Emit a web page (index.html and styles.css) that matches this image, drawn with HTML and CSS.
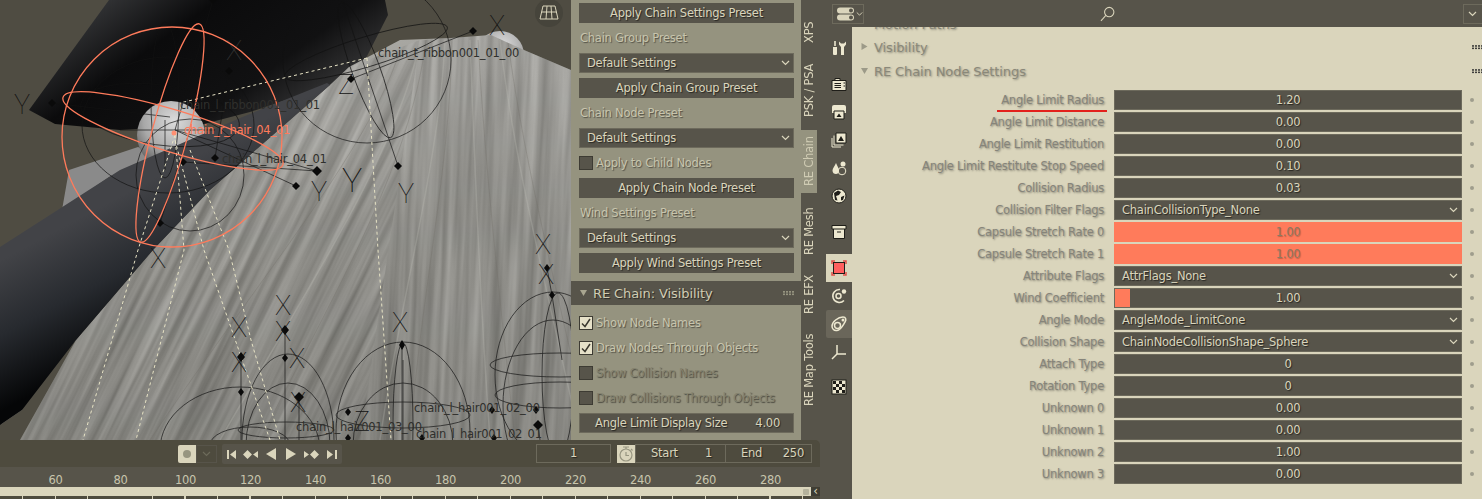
FILE: index.html
```html
<!DOCTYPE html>
<html lang="en">
<head>
<meta charset="utf-8">
<title>RE Chain Node Settings</title>
<link rel="stylesheet" href="styles.css">
</head>
<body>
<div class="app">
  <div class="left">
    <div class="top">
      <svg class="view" width="571" height="440" viewBox="0 0 571 440">
        <defs>
          <linearGradient id="hat" x1="0" y1="0" x2="1" y2="0.5"><stop offset="0" stop-color="#505154"/><stop offset=".18" stop-color="#303133"/><stop offset=".42" stop-color="#0b0b0c"/><stop offset=".75" stop-color="#111112"/><stop offset="1" stop-color="#3a3a3b"/></linearGradient>
          <linearGradient id="band" x1="0.62" y1="0.2" x2="0.8" y2="0.55"><stop offset="0" stop-color="#424347"/><stop offset=".5" stop-color="#272a2f"/><stop offset="1" stop-color="#050607"/></linearGradient>
          <linearGradient id="cloth" x1="0" y1="0" x2="0" y2="1"><stop offset="0" stop-color="#a8a7a2"/><stop offset=".5" stop-color="#92918b"/><stop offset="1" stop-color="#878680"/></linearGradient>
          <radialGradient id="ball" cx=".55" cy=".3" r=".75"><stop offset="0" stop-color="#dcdcdc"/><stop offset=".6" stop-color="#a8a8a8"/><stop offset="1" stop-color="#555"/></radialGradient>
          <clipPath id="clothclip"><path d="M349 67L400 40L451 38L491 35L524 50L571 70V440H20L76 340L153 250L210 190L330 85Z"/></clipPath>
          <clipPath id="clipL"><path d="M349 67L420 40L360 440H20L76 340L153 250L210 190L330 85Z"/></clipPath>
          <clipPath id="clipR"><path d="M420 40L451 38L491 35L524 50L571 70V440H360Z"/></clipPath>
          <filter id="streak" x="0" y="0" width="1" height="1" color-interpolation-filters="sRGB"><feTurbulence type="fractalNoise" baseFrequency="0.11 0.004" numOctaves="3" seed="7"/><feColorMatrix values="1.500 0 0 0 -.25 1.500 0 0 0 -.25 1.500 0 0 0 -.25 0 0 0 0 1"/></filter>
        </defs>
        <rect class="v-bg" width="571" height="440"/>
        <circle cx="500" cy="55" r="24" fill="url(#ball)"/>
        <path d="M29 110L109 0H385L388 15L365 60L330 85L250 112L200 125L120 130L55 124Z" fill="url(#hat)"/>
        <path d="M62 210L69 170L138 147L170 160L109 177Z" class="v-box"/>
        <path d="M0 425L22 410L40 350L76 300V340Z" class="v-box2"/>
        <circle cx="171" cy="135" r="34" fill="url(#ball)"/>
        <path d="M349 67L400 40L451 38L491 35L524 50L571 70V440H20L76 340L153 250L210 190L330 85Z" fill="url(#cloth)"/>
        <g clip-path="url(#clipL)"><rect class="tex" x="-200" y="0" width="800" height="440" filter="url(#streak)" transform="translate(220 0) skewX(-26)"/></g>
        <g clip-path="url(#clipR)"><rect class="tex" x="200" y="0" width="500" height="440" filter="url(#streak)" transform="translate(60 0) skewX(-3)"/></g>
        <g clip-path="url(#clothclip)" class="strands">
          <path d="M420 40C400 150 300 300 220 440M445 40C440 160 400 300 380 440M470 40C475 170 480 300 490 440M500 40C515 170 550 300 580 440"/>
          <path class="s2" d="M400 50C370 150 250 290 150 440M426 40C410 170 330 300 260 440M452 40C450 170 420 300 410 440M478 40C485 170 500 300 515 440M508 42C525 170 560 300 590 440"/>
        </g>
        <path d="M327 83L240 118L120 170L0 247V425L22 410L76 340L153 250L210 190L330 85Z" fill="url(#band)"/>
        <g class="wire">
          <ellipse cx="168" cy="125" rx="86" ry="68"/>
          <ellipse cx="160" cy="115" rx="80" ry="30" transform="rotate(8 160 115)"/>
          <ellipse cx="165" cy="100" rx="14" ry="78"/>
          <ellipse cx="190" cy="175" rx="54" ry="56"/>
          <ellipse cx="367" cy="60" rx="84" ry="83"/>
          <ellipse cx="366" cy="52" rx="85" ry="15" transform="rotate(-17 366 52)"/>
          <ellipse cx="366" cy="70" rx="14" ry="72" transform="rotate(-20 366 70)"/>
          <path d="M52 103L170 117M213 0L175 130M473 31L351 79M342 0L398 166M175 130L296 186M175 130L317 171M183 162L317 171M229 71L215 158M160 223L190 130M120 130H215M165 120V170"/>
          <path d="M241 357V440M285 330V440M402 345V440M547 268L552 295L562 360M299 397V440M538 425L540 440M403 360V440"/>
          <ellipse cx="403" cy="432" rx="67" ry="90"/>
          <ellipse cx="403" cy="445" rx="50" ry="62"/>
          <ellipse cx="403" cy="415" rx="67" ry="13"/>
          <ellipse cx="403" cy="425" rx="10" ry="82"/>
          <ellipse cx="288" cy="440" rx="46" ry="86"/>
          <ellipse cx="288" cy="445" rx="42" ry="62"/>
          <ellipse cx="286" cy="430" rx="48" ry="8"/>
          <ellipse cx="240" cy="450" rx="80" ry="63"/>
          <ellipse cx="250" cy="445" rx="40" ry="18"/>
          <ellipse cx="553" cy="375" rx="58" ry="83"/>
          <ellipse cx="553" cy="405" rx="50" ry="85"/>
          <ellipse cx="560" cy="365" rx="70" ry="12"/>
          <ellipse cx="560" cy="395" rx="65" ry="13"/>
          <ellipse cx="558" cy="375" rx="16" ry="82"/>
        </g>
        <path class="dash" d="M367 58L180 103M367 58L378 250L391 440M175 135L138 250L83 440M175 135L184 250L136 440M175 140L204 250L270 440M190 150L229 250L251 340L280 440"/>
        <g class="nodes">
          <path d="M52 99l4 4-4 4-4-4zM473 27l4 4-4 4-4-4zM351 75l4 4-4 4-4-4zM398 162l4 4-4 4-4-4zM317 166l5 5-5 5-5-5zM296 182l4 4-4 4-4-4zM160 219l4 4-4 4-4-4zM213-4l4 4-4 4-4-4zM229 67l4 4-4 4-4-4zM215 154l4 4-4 4-4-4zM183 158l4 4-4 4-4-4zM241 352l4 5-4 5-4-5zM285 325l4 5-4 5-4-5zM285 354l3 4-3 4-3-4zM299 392l5 5-5 5-5-5zM402 340l3 5-3 5-3-5zM348 408l3 4-3 4-3-4zM538 420l5 5-5 5-5-5zM547 264l3 4-3 4-3-4zM552 291l3 4-3 4-3-4zM536 406l3 4-3 4-3-4zM492 406l3 4-3 4-3-4zM422 434l3 4-3 4-3-4zM494 434l3 4-3 4-3-4zM348 434l3 4-3 4-3-4zM241 388l3 4-3 4-3-4z"/>
        </g>
        <g class="axis">
          <text x="14" y="114">Y</text><text x="489" y="35">X</text><text x="226" y="60" class="axis-dim">X</text><text x="338" y="94">Z</text><text x="311" y="201">Y</text><text x="342" y="192" class="axis-big">Y</text><text x="398" y="203">Y</text><text x="535" y="254">X</text><text x="150" y="268">X</text>
          <text x="231" y="337">X</text><text x="275" y="315">X</text><text x="392" y="332">X</text><text x="538" y="284">X</text><text x="231" y="372">X</text><text x="275" y="341">X</text><text x="289" y="368">X</text><text x="290" y="412">X</text><text x="354" y="431">Z</text>
        </g>
        <g class="orange">
          <circle cx="172" cy="137" r="110"/>
          <ellipse cx="173" cy="131" rx="115" ry="21" transform="rotate(17 173 131)"/>
          <ellipse cx="170" cy="133" rx="113" ry="18" transform="rotate(-75 170 133)"/>
        </g>
        <circle class="o-dot" cx="174" cy="133" r="2.5"/>
        <g class="v-label">
          <text x="378" y="57">chain_t_ribbon001_01_00</text>
          <text x="180" y="109">chain_l_ribbon001_01_01</text>
          <text x="222" y="163">chain_l_hair_04_01</text>
          <text x="414" y="412">chain_l_hair001_02_00</text>
          <text x="296" y="431">chain_l_hair001_03_00</text>
          <text x="416" y="438">chain_l_hair001_02_01</text>
        </g>
        <text class="v-active" x="184" y="134">chain_r_hair_04_01</text>
        <circle class="grid-bg" cx="549" cy="13" r="14"/>
        <path class="grid-ico" d="M543 6H555L558 19H540ZM541.5 12H556.5M547 6L546 19M551 6L552 19"/>
      </svg>

      <div class="panel">
        <div class="rows">
          <button class="btn">Apply Chain Settings Preset</button>
          <div class="lbl">Chain Group Preset</div>
          <div class="select"><span>Default Settings</span><svg class="chev" width="9" height="6" viewBox="0 0 9 6"><path d="M1 1l3.5 3.5L8 1"/></svg></div>
          <button class="btn">Apply Chain Group Preset</button>
          <div class="lbl">Chain Node Preset</div>
          <div class="select"><span>Default Settings</span><svg class="chev" width="9" height="6" viewBox="0 0 9 6"><path d="M1 1l3.5 3.5L8 1"/></svg></div>
          <div class="check"><i class="box"></i><span class="lbl">Apply to Child Nodes</span></div>
          <button class="btn">Apply Chain Node Preset</button>
          <div class="lbl">Wind Settings Preset</div>
          <div class="select"><span>Default Settings</span><svg class="chev" width="9" height="6" viewBox="0 0 9 6"><path d="M1 1l3.5 3.5L8 1"/></svg></div>
          <button class="btn">Apply Wind Settings Preset</button>
        </div>
        <div class="phead">
          <svg class="ptri" width="8" height="7" viewBox="0 0 8 7"><path d="M0 0H7L3.5 6Z"/></svg>
          <span>RE Chain: Visibility</span>
          <i class="grip"></i>
        </div>
        <div class="rows rows-b">
          <div class="check"><i class="box on"><svg width="14" height="14" viewBox="0 0 14 14"><path d="M3 7.5L6 10.5L11 3"/></svg></i><span class="lbl">Show Node Names</span></div>
          <div class="check"><i class="box on"><svg width="14" height="14" viewBox="0 0 14 14"><path d="M3 7.5L6 10.5L11 3"/></svg></i><span class="lbl">Draw Nodes Through Objects</span></div>
          <div class="check dim"><i class="box"></i><span class="lbl">Show Collision Names</span></div>
          <div class="check dim"><i class="box"></i><span class="lbl">Draw Collisions Through Objects</span></div>
          <div class="numfield"><span>Angle Limit Display Size</span><span>4.00</span></div>
        </div>
      </div>

      <div class="tabs">
        <span class="tab t-xps">XPS</span>
        <span class="tab t-psk">PSK / PSA</span>
        <span class="tab active">RE Chain</span>
        <span class="tab t-mesh">RE Mesh</span>
        <span class="tab t-efx">RE EFX</span>
        <span class="tab t-map">RE Map Tools</span>
      </div>
    </div>

    <div class="timeline">
      <div class="tl-head">
        <div class="rec"><i></i></div>
        <div class="rec-drop"><svg class="chev" width="9" height="6" viewBox="0 0 9 6"><path d="M1 1l3.5 3.5L8 1"/></svg></div>
        <div class="transport">
          <svg width="120" height="20" viewBox="0 0 120 20">
            <path d="M5 6H7V15H5ZM8 10.500L14 6V15Z"/>
            <path d="M25.500 6L30 10.500L25.500 15L21 10.500ZM31 10.500L36 7V14Z"/>
            <path d="M44 10L54 4V16Z"/>
            <path d="M64 4L74 10L64 16Z"/>
            <path d="M82 7L87 10.500L82 14ZM92.500 6L97 10.500L92.500 15L88 10.500Z"/>
            <path d="M105 6L111 10.500L105 15ZM113 6H115V15H113Z"/>
          </svg>
        </div>
        <div class="frame">1</div>
        <div class="timer"><svg width="18" height="18" viewBox="0 0 18 18"><circle cx="9" cy="10" r="6"/><path d="M6 2H12M9 2V4M9 7V10.5H12M14 4L15.5 5.5"/></svg></div>
        <div class="range"><span class="r-l">Start</span><span class="r-v">1</span></div>
        <div class="range r-end"><span class="r-l">End</span><span class="r-v">250</span></div>
      </div>
      <div class="ruler">
        <span>60</span><span>80</span><span>100</span><span>120</span><span>140</span><span>160</span><span>180</span><span>200</span><span>220</span><span>240</span><span>260</span><span>280</span>
      </div>
      <div class="scroll"><div class="thumb"><i></i></div><div class="arrow">‹</div></div>
      <div class="ticks"></div>
    </div>
  </div>

  <div class="right">
    <div class="phdr">
      <div class="etype">
        <svg width="19" height="14" viewBox="0 0 19 14"><path class="e1" d="M3 0.5H14A3 3 0 0 1 14 6.5H3A3 3 0 0 1 3 .5Z"/><path class="e1" d="M3 7.5H14A3 3 0 0 1 14 13.5H3A3 3 0 0 1 3 7.5Z"/><circle class="e2" cx="14" cy="3.5" r="2"/><circle class="e2" cx="14" cy="10.5" r="2"/></svg>
        <svg class="chev" width="9" height="6" viewBox="0 0 9 6"><path d="M1 1l3.5 3.5L8 1"/></svg>
      </div>
      <svg class="search" width="16" height="16" viewBox="0 0 16 16"><circle cx="9.5" cy="6" r="4.8"/><path d="M6 9.5L1 15"/></svg>
      <div class="opts"><svg class="chev" width="9" height="6" viewBox="0 0 9 6"><path d="M1 1l3.5 3.5L8 1"/></svg></div>
    </div>
    <div class="rbody">
      <nav class="nav">
        <a class="ni"><svg width="16" height="16" viewBox="0 0 16 16"><path class="f" d="M2 7H6V14A1 1 0 0 1 5 15H3A1 1 0 0 1 2 14ZM3.2 1H4.8V6H3.2ZM8 1.5V4.5L10 7V15H13V7L15 4.5V1.5L13 3.5H10Z"/></svg></a>
        <a class="ni gap-t"><svg width="16" height="16" viewBox="0 0 16 16"><path class="o" d="M1 4.5H15V14.5H1ZM4 4.5V2.5H9V4.5"/><path class="k" d="M3.5 7.5H10M3.5 9.5H10M3.5 11.5H10M12.5 7H14M12.5 10H14"/></svg></a>
        <a class="ni"><svg width="16" height="16" viewBox="0 0 16 16"><path class="f" d="M3 1H13A2 2 0 0 1 15 3V9H1V3A2 2 0 0 1 3 1Z"/><path class="o" d="M3 7H13V15H3Z"/><path class="k-f" d="M5.5 13L8 9.5L10.5 13Z"/></svg></a>
        <a class="ni"><svg width="16" height="16" viewBox="0 0 16 16"><path class="o" d="M5 1H15V11H5Z"/><path class="o3" d="M3 3.5V13H12.5M1 6V15H10"/><path class="k-f" d="M7 9L10 4L13 9Z"/></svg></a>
        <a class="ni"><svg width="16" height="16" viewBox="0 0 16 16"><path class="f" d="M5 3C6 6 8 8 8 10.5C8 13 6.5 14 5 14C3 14 1.500 13 1.500 10.500C1.500 8 4 6 5 3Z"/><circle class="f" cx="12" cy="4" r="2.500"/><circle class="o3" cx="11" cy="11" r="3.800"/></svg></a>
        <a class="ni"><svg width="16" height="16" viewBox="0 0 16 16"><circle class="o" cx="8" cy="8" r="7"/><path class="k-f" d="M3 5L7 2.500L10 4L8 7L5 8L6.500 12.500L4 12ZM10 9L13.500 7.500L12 12L10 12.500Z"/></svg></a>
        <a class="ni gap-t"><svg width="16" height="16" viewBox="0 0 16 16"><path class="o" d="M1 1.500H15V5H1ZM2.500 5V14.500H13.500V5M6 8H10"/></svg></a>
        <a class="ni gap-t2 on"><svg width="18" height="18" viewBox="0 0 18 18"><rect class="red" x="3.500" y="3.500" width="11" height="11"/><path class="corner" d="M2 5V2H5M13 2H16V5M16 13V16H13M5 16H2V13"/></svg></a>
        <a class="ni"><svg width="16" height="16" viewBox="0 0 16 16"><path class="o2w" d="M13 12.500A6.500 6.500 0 1 1 9 1.500"/><circle class="o2w" cx="7.500" cy="8" r="2.500"/><circle class="f" cx="13" cy="3.500" r="2.200"/></svg></a>
        <a class="ni hov"><svg width="18" height="18" viewBox="0 0 18 18"><path class="o2w" d="M2 11C2 7 8 2 13 2C16 2 16.500 5 15 7C13 10 11 15 7 15.500C4 16 2 14 2 11Z"/><circle class="o2w" cx="7.500" cy="10.500" r="3"/><circle class="f" cx="13" cy="5" r="1.500"/></svg></a>
        <a class="ni"><svg width="16" height="16" viewBox="0 0 16 16"><path class="o2w" d="M6 1V10L1 15M6 10H15"/></svg></a>
        <a class="ni gap-t3"><svg width="16" height="16" viewBox="0 0 16 16"><rect class="o" x="1" y="1" width="14" height="14"/><path class="k-f" d="M2 2H5V5H2ZM8 2H11V5H8ZM5 5H8V8H5ZM11 5H14V8H11ZM2 8H5V11H2ZM8 8H11V11H8ZM5 11H8V14H5ZM11 11H14V14H11Z"/></svg></a>
      </nav>
      <main class="props">
        <div class="sec sec-clip"><span>Motion Paths</span></div>
        <div class="sec"><svg class="tri" width="7" height="8" viewBox="0 0 7 8"><path d="M0 0V7L6 3.500Z"/></svg><span>Visibility</span><i class="grip2"></i></div>
        <div class="sec"><svg class="tri" width="8" height="7" viewBox="0 0 8 7"><path d="M0 0H7L3.500 6Z"/></svg><span>RE Chain Node Settings</span><i class="grip2"></i></div>
        <div class="plist">
          <div class="row"><label class="marked">Angle Limit Radius</label><div class="f-num">1.20</div><i class="dec"></i></div>
          <div class="row"><label>Angle Limit Distance</label><div class="f-num">0.00</div><i class="dec"></i></div>
          <div class="row"><label>Angle Limit Restitution</label><div class="f-num">0.00</div><i class="dec"></i></div>
          <div class="row"><label>Angle Limit Restitute Stop Speed</label><div class="f-num">0.10</div><i class="dec"></i></div>
          <div class="row"><label>Collision Radius</label><div class="f-num">0.03</div><i class="dec"></i></div>
          <div class="row"><label>Collision Filter Flags</label><div class="f-sel"><span>ChainCollisionType_None</span><svg class="chev" width="9" height="6" viewBox="0 0 9 6"><path d="M1 1l3.5 3.5L8 1"/></svg></div><i class="dec"></i></div>
          <div class="row"><label>Capsule Stretch Rate 0</label><div class="f-num full">1.00</div><i class="dec"></i></div>
          <div class="row"><label>Capsule Stretch Rate 1</label><div class="f-num full">1.00</div><i class="dec"></i></div>
          <div class="row"><label>Attribute Flags</label><div class="f-sel"><span>AttrFlags_None</span><svg class="chev" width="9" height="6" viewBox="0 0 9 6"><path d="M1 1l3.5 3.5L8 1"/></svg></div><i class="dec"></i></div>
          <div class="row"><label>Wind Coefficient</label><div class="f-num part">1.00</div><i class="dec"></i></div>
          <div class="row"><label>Angle Mode</label><div class="f-sel"><span>AngleMode_LimitCone</span><svg class="chev" width="9" height="6" viewBox="0 0 9 6"><path d="M1 1l3.5 3.5L8 1"/></svg></div><i class="dec"></i></div>
          <div class="row"><label>Collision Shape</label><div class="f-sel"><span>ChainNodeCollisionShape_Sphere</span><svg class="chev" width="9" height="6" viewBox="0 0 9 6"><path d="M1 1l3.5 3.5L8 1"/></svg></div><i class="dec"></i></div>
          <div class="row"><label>Attach Type</label><div class="f-num">0</div><i class="dec"></i></div>
          <div class="row"><label>Rotation Type</label><div class="f-num">0</div><i class="dec"></i></div>
          <div class="row"><label>Unknown 0</label><div class="f-num">0.00</div><i class="dec"></i></div>
          <div class="row"><label>Unknown 1</label><div class="f-num">0.00</div><i class="dec"></i></div>
          <div class="row"><label>Unknown 2</label><div class="f-num">1.00</div><i class="dec"></i></div>
          <div class="row"><label>Unknown 3</label><div class="f-num">0.00</div><i class="dec"></i></div>
        </div>
      </main>
    </div>
  </div>
</div>
</body>
</html>
```
FILE: styles.css
```css
* { box-sizing: border-box; }
html, body { margin: 0; padding: 0; }
body { width: 1482px; height: 499px; overflow: hidden; background: #57544a; font-family: "DejaVu Sans", sans-serif; font-size: 11.5px; letter-spacing: -.24px; color: #dad5bc; }
.app { display: flex; width: 1482px; height: 499px; }
.left { width: 826px; flex: none; display: flex; flex-direction: column; }
.top { display: flex; height: 440px; }
.view { display: block; flex: none; }

.v-bg { fill: #4f4c42; }
.v-box { fill: #8a8a8a; }
.v-box2 { fill: #8c8c88; }
.tex { opacity: .2; }
.strands path { fill: none; stroke: #c4c3bd; stroke-width: 1.500; opacity: .25; }
.strands .s2 { stroke: #6f6e68; stroke-width: 1; opacity: .3; }
.wire { fill: none; stroke: #111; stroke-width: .8; opacity: .85; }
.dash { fill: none; stroke: #e8e4c6; stroke-width: 1; stroke-dasharray: 3 3; }
.nodes { fill: #0a0a0a; }
.axis text { font-family: Roboto, sans-serif; font-weight: 100; font-size: 27px; fill: #111; letter-spacing: 0; }
.axis .axis-big { font-size: 34px; }
.axis .axis-dim { fill: #333; }
.orange { fill: none; stroke: #ff7b5b; stroke-width: 1.300; }
.o-dot { fill: #ff8f72; }
.v-label text { font-size: 11.5px; fill: #2f2f2c; }
.v-active { font-size: 11.5px; fill: #ff7b5b; }
.grid-bg { fill: #46443b; }
.grid-ico { fill: none; stroke: #dad5bc; stroke-width: 1; }

.panel { width: 230px; flex: none; background: #95937f; display: flex; flex-direction: column; }
.rows { display: flex; flex-direction: column; gap: 5px; padding: 3px 7px 0 8px; }
.rows-b { padding-top: 8px; }
.rows > * { height: 20px; flex: none; }
.btn, .select, .numfield { background: #57544a; color: #dad5bc; font: inherit; letter-spacing: inherit; border: 1px solid #6d6a5c; text-shadow: 1px 1px 1px rgba(0,0,0,.55); }
.btn { display: block; width: 100%; padding: 1px 0 0; text-align: center; line-height: 17px; border-color: #57544a; }
.select { display: flex; justify-content: space-between; align-items: center; padding: 0 3px 0 7px; }
.numfield { display: flex; justify-content: space-between; align-items: center; padding: 0 13px 0 15px; }
.chev { fill: none; stroke: #dad5bc; stroke-width: 1.200; flex: none; }
.lbl { color: #c8c5ad; line-height: 21px; text-shadow: 1px 1px 1px rgba(0,0,0,.45); }
.rows > .lbl { padding-left: 1px; }
.check { display: flex; align-items: center; gap: 3px; }
.box { display: block; width: 14px; height: 14px; background: #57544a; border: 1px solid #3d3b33; }
.box svg { display: block; margin: -1px; fill: none; stroke: #3b392f; stroke-width: 1.500; }
.box.on { background: #e6e1c9; }
.dim .lbl { color: #85836f; text-shadow: 1px 1px 1px rgba(0,0,0,.5); }
.phead { display: flex; align-items: center; height: 24px; margin-top: 8px; background: #57544a; font-size: 13px; letter-spacing: -.1px; padding: 0 7px 0 9px; text-shadow: 1px 1px 1px rgba(0,0,0,.55); color: #d0ccb3; }
.ptri { fill: #a9a690; margin-right: 5px; }
.phead span { flex: 1; }
.grip { width: 11px; height: 5px; background: radial-gradient(circle at 1px 1px, #95937f 0.8px, transparent 1px) 0 0 / 3px 2.500px; }

.tabs { width: 25px; flex: none; display: flex; flex-direction: column; align-items: flex-start; padding-top: 20px; background: #57544a; }
.tab { writing-mode: vertical-rl; transform: rotate(180deg); white-space: nowrap; width: 16px; display: flex; justify-content: center; align-items: center; line-height: 16px; color: #dad5bc; flex: none; }
.t-xps { height: 24px; margin-bottom: 19px; }
.t-psk { height: 54px; margin-bottom: 13px; }
.tab.active { background: #95937f; color: #cfcbb3; height: 63px; margin-bottom: 14px; }
.t-mesh { height: 48px; margin-bottom: 20px; }
.t-efx { height: 38px; margin-bottom: 20px; }
.t-map { height: 74px; }

.timeline { width: 820px; height: 59px; background: #4e4b3e; border-top-right-radius: 5px; overflow: hidden; }
.tl-head { display: flex; align-items: center; height: 27px; padding-left: 178px; }
.rec { width: 18px; height: 18px; background: #dad5bc; display: flex; align-items: center; justify-content: center; border-radius: 2px 0 0 2px; }
.rec i { width: 8px; height: 8px; border-radius: 50%; background: #979580; }
.rec-drop { width: 21px; height: 18px; border: 1px solid #57544a; display: flex; align-items: center; justify-content: center; }
.rec-drop .chev { stroke: #6c6a5a; }
.transport { width: 120px; height: 20px; margin-left: 5px; background: #57544a; border-radius: 2px; }
.transport svg { display: block; fill: #dad5bc; }
.frame { width: 75px; height: 19px; margin-left: 194px; border: 1px solid #6d6a5c; text-align: center; line-height: 17px; text-shadow: 1px 1px 1px rgba(0,0,0,.5); }
.timer { width: 18px; height: 18px; margin-left: 6px; background: #dad5bc; }
.timer svg { display: block; fill: none; stroke: #979580; stroke-width: 1.200; }
.range { width: 91px; height: 19px; display: flex; justify-content: space-between; border: 1px solid #6d6a5c; line-height: 17px; padding: 0 13px 0 15px; text-shadow: 1px 1px 1px rgba(0,0,0,.5); }
.r-end { width: 87px; margin-left: -1px; padding: 0 7px 0 15px; }
.ruler { display: flex; height: 20px; padding-left: 23px; background: #57544a; line-height: 26px; color: #c8c5ad; }
.ruler span { width: 65px; text-align: center; flex: none; }
.scroll { display: flex; height: 9px; background: #4e4b3e; }
.thumb { width: 811px; background: #dad5bc; display: flex; justify-content: flex-end; align-items: center; padding-right: 2px; }
.thumb i { width: 6px; height: 6px; background: #b5b29c; border-radius: 1px; }
.arrow { flex: 1; background: #3f3d33; line-height: 8px; font-size: 12px; text-align: center; color: #dad5bc; }
.ticks { height: 3px; background: repeating-linear-gradient(90deg, transparent 0 22px, #dad5bc 22px 23px, transparent 23px 32.5px); }

.right { flex: 1; display: flex; flex-direction: column; min-width: 0; }
.phdr { display: flex; align-items: center; height: 27px; flex: none; padding-left: 6px; background: #57544a; }
.etype { width: 32px; height: 20px; border: 1px solid #6d6a5c; display: flex; align-items: center; justify-content: space-between; padding: 0 2px 0 4px; }
.etype svg:first-child { flex: none; }
.e1 { fill: #dad5bc; }
.e2 { fill: #57544a; }
.etype .chev { width: 7px; }
.search { margin-left: 236px; fill: none; stroke: #dad5bc; stroke-width: 1.100; }
.opts { width: 20px; height: 20px; margin-left: 347px; border: 1px solid #6d6a5c; border-right: 0; display: flex; align-items: center; justify-content: center; }
.rbody { flex: 1; display: flex; min-height: 0; }
.nav { width: 26px; flex: none; display: flex; flex-direction: column; padding-top: 7px; background: #57544a; }
.ni { display: flex; height: 28px; flex: none; align-items: center; justify-content: center; }
.gap-t { margin-top: 8px; }
.gap-t2 { margin-top: 8px; }
.gap-t3 { margin-top: 7px; }
.ni.on { background: #dad5bc; }
.ni.hov { background: #6a665a; border-radius: 2px 0 0 2px; }
.nav svg { display: block; overflow: visible; }
.f { fill: #ede8d0; stroke: none; }
.o { fill: #ede8d0; stroke: #1f1e19; stroke-width: 1; }
.o3 { fill: none; stroke: #ede8d0; stroke-width: 1; }
.o2w { fill: none; stroke: #ede8d0; stroke-width: 1.500; }
.k { fill: none; stroke: #1f1e19; stroke-width: 1; }
.k-f { fill: #1f1e19; stroke: none; }
.red { fill: #ff5f5f; stroke: #1f1e19; stroke-width: 1; }
.corner { fill: none; stroke: #e0504a; stroke-width: 1.500; }

.props { flex: 1; min-width: 0; background: #dad5bc; overflow: hidden; color: #8d8b7b; padding-top: 4px; }
.sec { display: flex; align-items: center; height: 24px; padding-left: 9px; font-size: 13px; letter-spacing: -.1px; color: #8a8879; text-shadow: 1px 1px 2px rgba(0,0,0,.35); }
.sec span { margin-left: 5px; }
.sec .tri { fill: #9c9a88; flex: none; width: 8px; }
.sec-clip { height: 20px; margin-top: -17px; margin-bottom: 1px; padding-left: 22px; }
.sec-clip span { margin-left: 0; }
.grip2 { margin-left: auto; width: 10px; height: 5px; background: radial-gradient(circle at 1px 1px, #333 .7px, transparent 1px) 0 0 / 3px 2.500px; }
.plist { display: grid; grid-auto-rows: 20px; row-gap: 2px; padding-top: 7px; }
.row { display: flex; align-items: center; }
.row label { width: 252px; flex: none; text-align: right; color: #86847a; text-shadow: 1px 1px 2px rgba(0,0,0,.4); position: relative; }
.marked::after { content: ""; position: absolute; right: -3px; bottom: -5px; width: 110px; height: 2px; background: #e3211c; }
.f-num, .f-sel { width: 348px; height: 20px; margin-left: 10px; background: #57544a; border: 1px solid #6d6a5c; color: #dad5bc; text-shadow: 1px 1px 1px rgba(0,0,0,.55); flex: none; }
.f-num { text-align: center; line-height: 18px; }
.f-sel { display: flex; justify-content: space-between; align-items: center; padding: 0 3px 0 7px; }
.full { background: #ff7b5b; border-color: #ff7b5b; color: #8d7a62; text-shadow: 1px 1px 1px rgba(0,0,0,.25); }
.part { background: linear-gradient(90deg, #ff7b5b 15px, #57544a 15px); }
.dec { width: 4px; height: 4px; border-radius: 50%; background: #9f9d8d; margin-left: 8px; flex: none; }
```
